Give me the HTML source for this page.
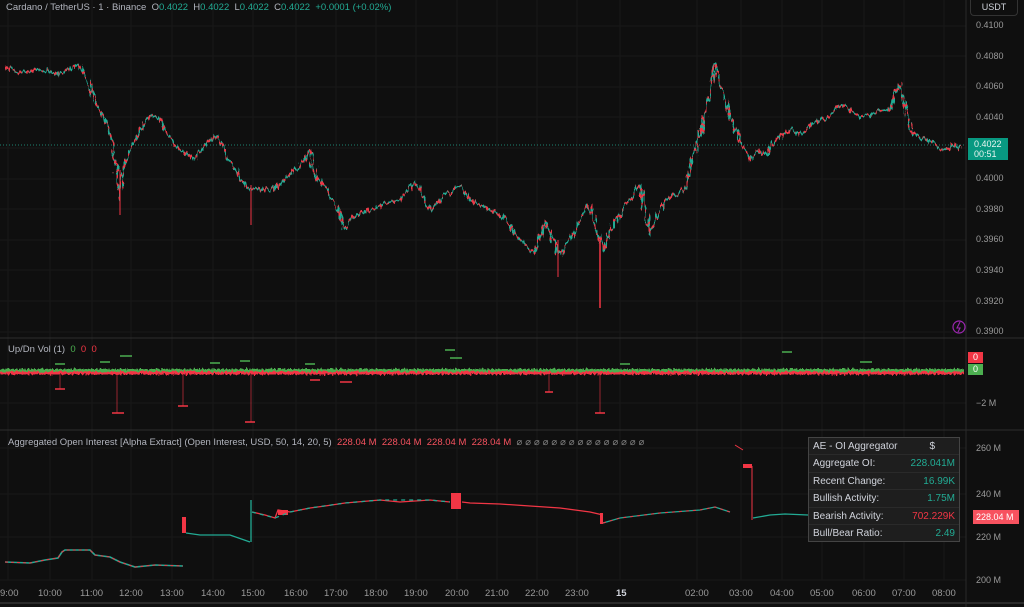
<!DOCTYPE html>
<html><head><meta charset="utf-8"><style>
*{margin:0;padding:0;box-sizing:border-box}
body{width:1024px;height:607px;background:#0f0f0f;overflow:hidden;font-family:"Liberation Sans",sans-serif;position:relative;color:#b2b5be}
.t{position:absolute;font-size:9.5px;white-space:nowrap}
.ax{position:absolute;font-size:9px;color:#9a9a9a;left:976px}
.g{color:#22ab94}.r{color:#f23645}
.tt{position:absolute;left:808px;top:437px;width:152px;height:105px;background:#1e1e1e;border:1px solid #444;font-size:10px;color:#d1d4dc}
.tt div{height:17.4px;line-height:17.4px;padding:0 4px;display:flex;justify-content:space-between;border-bottom:1px solid #2a2a2a}
.tm{position:absolute;top:588px;font-size:9.5px;color:#9a9a9a}
</style></head><body>
<svg width="1024" height="607" style="position:absolute;left:0;top:0">
<defs>
<filter id="j" x="-5%" y="-20%" width="110%" height="140%">
<feTurbulence type="fractalNoise" baseFrequency="0.35 0.08" numOctaves="2" seed="3"/>
<feDisplacementMap in="SourceGraphic" scale="10" xChannelSelector="R" yChannelSelector="G"/>
</filter>
<filter id="v" x="0" y="-100%" width="100%" height="300%">
<feTurbulence type="fractalNoise" baseFrequency="0.5 0.2" numOctaves="2" seed="7"/>
<feDisplacementMap in="SourceGraphic" scale="5" xChannelSelector="R" yChannelSelector="G"/>
</filter>
</defs>
<g stroke="#191919" stroke-width="1">
<line x1="0" y1="26" x2="966" y2="26"/><line x1="0" y1="56" x2="966" y2="56"/><line x1="0" y1="87" x2="966" y2="87"/><line x1="0" y1="117" x2="966" y2="117"/><line x1="0" y1="148" x2="966" y2="148"/><line x1="0" y1="179" x2="966" y2="179"/><line x1="0" y1="209" x2="966" y2="209"/><line x1="0" y1="240" x2="966" y2="240"/><line x1="0" y1="270" x2="966" y2="270"/><line x1="0" y1="301" x2="966" y2="301"/><line x1="0" y1="332" x2="966" y2="332"/>
<line x1="0" y1="403" x2="966" y2="403"/><line x1="0" y1="448" x2="966" y2="448"/><line x1="0" y1="494" x2="966" y2="494"/><line x1="0" y1="537" x2="966" y2="537"/><line x1="0" y1="580" x2="966" y2="580"/>
<line x1="8" y1="0" x2="8" y2="580"/><line x1="50" y1="0" x2="50" y2="580"/><line x1="92" y1="0" x2="92" y2="580"/><line x1="131" y1="0" x2="131" y2="580"/><line x1="172" y1="0" x2="172" y2="580"/><line x1="213" y1="0" x2="213" y2="580"/><line x1="253" y1="0" x2="253" y2="580"/><line x1="296" y1="0" x2="296" y2="580"/><line x1="336" y1="0" x2="336" y2="580"/><line x1="376" y1="0" x2="376" y2="580"/><line x1="416" y1="0" x2="416" y2="580"/><line x1="457" y1="0" x2="457" y2="580"/><line x1="497" y1="0" x2="497" y2="580"/><line x1="537" y1="0" x2="537" y2="580"/><line x1="577" y1="0" x2="577" y2="580"/><line x1="620" y1="0" x2="620" y2="580"/><line x1="697" y1="0" x2="697" y2="580"/><line x1="741" y1="0" x2="741" y2="580"/><line x1="782" y1="0" x2="782" y2="580"/><line x1="822" y1="0" x2="822" y2="580"/><line x1="864" y1="0" x2="864" y2="580"/><line x1="904" y1="0" x2="904" y2="580"/><line x1="944" y1="0" x2="944" y2="580"/>
</g>
<line x1="0" y1="338" x2="1024" y2="338" stroke="#2e2e2e"/>
<line x1="0" y1="430" x2="1024" y2="430" stroke="#2e2e2e"/>
<line x1="966" y1="0" x2="966" y2="607" stroke="#2a2a2a"/>
<line x1="0" y1="603" x2="1024" y2="603" stroke="#2a2a2a" stroke-width="2"/>
<line x1="0" y1="145" x2="966" y2="145" stroke="#22ab94" stroke-dasharray="1,2" stroke-width="0.8"/>
<g filter="url(#j)">
<polyline fill="none" stroke="#22ab94" stroke-width="2.2" stroke-linejoin="round" points="5,68 20,72 40,70 60,74 80,65 95,100 105,120 110,130 115,160 120,200 125,160 130,150 140,130 150,115 160,120 165,130 175,145 180,150 190,158 195,160 205,145 215,135 225,150 235,170 245,185 250,190 260,188 270,190 280,185 290,175 300,165 310,150 315,175 325,185 330,195 340,215 345,230 355,215 370,210 385,205 400,200 415,180 425,200 430,210 445,195 460,185 470,200 480,205 490,210 500,215 510,225 520,240 530,250 535,255 545,220 555,245 560,255 570,240 575,230 585,210 590,205 595,225 600,240 604,250 610,230 620,215 630,200 640,185 645,210 650,235 658,215 665,200 675,195 685,190 690,165 700,135 708,100 715,65 720,85 725,100 735,130 745,150 750,160 760,150 765,155 775,140 790,130 800,135 810,125 820,120 830,115 840,105 850,110 860,118 870,115 880,110 890,110 895,95 900,85 905,105 910,130 920,138 930,140 940,150 950,148 955,145 960,148"/>
<polyline fill="none" stroke="#f23645" stroke-width="2.2" stroke-dasharray="3,4" stroke-linejoin="round" points="5,68 20,72 40,70 60,74 80,65 95,100 105,120 110,130 115,160 120,200 125,160 130,150 140,130 150,115 160,120 165,130 175,145 180,150 190,158 195,160 205,145 215,135 225,150 235,170 245,185 250,190 260,188 270,190 280,185 290,175 300,165 310,150 315,175 325,185 330,195 340,215 345,230 355,215 370,210 385,205 400,200 415,180 425,200 430,210 445,195 460,185 470,200 480,205 490,210 500,215 510,225 520,240 530,250 535,255 545,220 555,245 560,255 570,240 575,230 585,210 590,205 595,225 600,240 604,250 610,230 620,215 630,200 640,185 645,210 650,235 658,215 665,200 675,195 685,190 690,165 700,135 708,100 715,65 720,85 725,100 735,130 745,150 750,160 760,150 765,155 775,140 790,130 800,135 810,125 820,120 830,115 840,105 850,110 860,118 870,115 880,110 890,110 895,95 900,85 905,105 910,130 920,138 930,140 940,150 950,148 955,145 960,148"/>
</g>
<line x1="600" y1="240" x2="600" y2="308" stroke="#f23645" stroke-width="1.5"/>
<line x1="120" y1="170" x2="120" y2="215" stroke="#f23645"/>
<line x1="558" y1="240" x2="558" y2="277" stroke="#f23645"/>
<line x1="251" y1="185" x2="251" y2="225" stroke="#f23645"/>
<!-- volume -->
<g filter="url(#v)">
<rect x="0" y="369" width="965" height="2.5" fill="#4caf50"/>
<rect x="0" y="371.5" width="965" height="3" fill="#f23645"/>
</g>
<g stroke="#4caf50" stroke-width="1.5"><line x1="55" y1="364" x2="65" y2="364"/><line x1="100" y1="362" x2="110" y2="362"/><line x1="120" y1="356" x2="132" y2="356"/><line x1="210" y1="363" x2="220" y2="363"/><line x1="240" y1="361" x2="250" y2="361"/><line x1="305" y1="364" x2="315" y2="364"/><line x1="445" y1="350" x2="455" y2="350"/><line x1="450" y1="358" x2="462" y2="358"/><line x1="620" y1="364" x2="630" y2="364"/><line x1="782" y1="352" x2="792" y2="352"/><line x1="860" y1="362" x2="872" y2="362"/></g>
<g stroke="#f23645" stroke-width="1.5"><line x1="55" y1="389" x2="65" y2="389"/><line x1="112" y1="413" x2="124" y2="413"/><line x1="178" y1="406" x2="188" y2="406"/><line x1="245" y1="422" x2="255" y2="422"/><line x1="545" y1="392" x2="553" y2="392"/><line x1="595" y1="413" x2="605" y2="413"/><line x1="310" y1="380" x2="320" y2="380"/><line x1="340" y1="382" x2="352" y2="382"/></g>
<g stroke="#f23645" stroke-width="0.6"><line x1="60" y1="372" x2="60" y2="389"/><line x1="117" y1="372" x2="117" y2="413"/><line x1="183" y1="372" x2="183" y2="406"/><line x1="251" y1="372" x2="251" y2="422"/><line x1="549" y1="372" x2="549" y2="392"/><line x1="600" y1="372" x2="600" y2="413"/></g>
<!-- OI -->
<polyline fill="none" stroke="#22ab94" stroke-width="1.6" points="5,562 30,563 45,560 58,558 62,552 65,550 90,550 95,555 110,557 120,562 135,567 155,565 183,566"/>
<polyline fill="none" stroke="#f23645" stroke-width="1" stroke-dasharray="3,3" points="5,562 30,563 45,560 58,558 62,552 65,550 90,550 95,555 110,557 120,562 135,567 155,565 183,566"/>
<rect x="182" y="517" width="4" height="16" fill="#f23645"/>
<polyline fill="none" stroke="#22ab94" stroke-width="1.3" points="186,533 200,535 230,535 250,542"/>
<line x1="251" y1="500" x2="251" y2="542" stroke="#22ab94" stroke-width="1.3"/>
<polyline fill="none" stroke="#f23645" stroke-width="1.3" points="252,512 265,515 275,518 278,510 290,512 310,508 325,506 345,503 380,500 400,502 430,500 450,502"/>
<rect x="278" y="510" width="10" height="5" fill="#f23645"/>
<rect x="451" y="493" width="10" height="16" fill="#f23645"/>
<polyline fill="none" stroke="#22ab94" stroke-width="1.3" stroke-dasharray="4,4" points="252,512 275,518 290,512 310,508 345,503 380,500 430,500 450,502"/>
<polyline fill="none" stroke="#f23645" stroke-width="1.3" points="462,502 470,503 500,504 530,506 560,508 590,512 603,515"/>
<rect x="600" y="513" width="3" height="11" fill="#f23645"/>
<polyline fill="none" stroke="#22ab94" stroke-width="1.3" points="603,523 620,518 660,513 700,510 715,507 730,512"/>
<polyline fill="none" stroke="#f23645" stroke-width="1" stroke-dasharray="3,4" points="603,523 620,518 660,513 700,510 715,507 730,512"/>
<line x1="735" y1="445" x2="743" y2="450" stroke="#f23645"/>
<rect x="743" y="464" width="9" height="4" fill="#f23645"/>
<line x1="752" y1="466" x2="752" y2="520" stroke="#f23645"/>
<polyline fill="none" stroke="#22ab94" stroke-width="1.3" points="753,518 770,515 785,514 808,515"/>
<circle cx="959" cy="327" r="6" fill="none" stroke="#9c27b0" stroke-width="1.2"/>
<path d="M960 322 L957 328 L960 328 L958 332" fill="none" stroke="#9c27b0" stroke-width="1.1"/>
</svg>
<div class="t" style="left:6px;top:2px;color:#b2b5be">Cardano / TetherUS · 1 · Binance &nbsp;O<span class="g">0.4022</span> &nbsp;H<span class="g">0.4022</span> &nbsp;L<span class="g">0.4022</span> &nbsp;C<span class="g">0.4022</span> &nbsp;<span class="g">+0.0001 (+0.02%)</span></div>
<div style="position:absolute;left:970px;top:0;width:48px;height:16px;border:1px solid #333;border-top:none;border-radius:0 0 4px 4px;font-size:9px;color:#d1d4dc;text-align:center;line-height:14px">USDT</div>
<div class="ax" style="top:20px">0.4100</div><div class="ax" style="top:51px">0.4080</div><div class="ax" style="top:81px">0.4060</div><div class="ax" style="top:112px">0.4040</div><div class="ax" style="top:173px">0.4000</div><div class="ax" style="top:204px">0.3980</div><div class="ax" style="top:234px">0.3960</div><div class="ax" style="top:265px">0.3940</div><div class="ax" style="top:296px">0.3920</div><div class="ax" style="top:326px">0.3900</div>
<div style="position:absolute;left:968px;top:138px;width:40px;height:22px;background:#089981;color:#e8f5f1;font-size:9px;line-height:10px;padding:1px 0 0 6px">0.4022<br>00:51</div>
<div class="t" style="left:8px;top:344px">Up/Dn Vol (1) &nbsp;<span style="color:#4caf50">0</span> &nbsp;<span class="r">0</span> &nbsp;<span class="r">0</span></div>
<div style="position:absolute;left:968px;top:352px;width:15px;height:11px;background:#f23645;color:#fff;font-size:9px;text-align:center;line-height:11px">0</div>
<div style="position:absolute;left:968px;top:364px;width:15px;height:11px;background:#4caf50;color:#fff;font-size:9px;text-align:center;line-height:11px">0</div>
<div class="ax" style="top:398px">−2 M</div>
<div class="t" style="left:8px;top:437px">Aggregated Open Interest [Alpha Extract] (Open Interest, USD, 50, 14, 20, 5) &nbsp;<span style="color:#f7525f">228.04 M &nbsp;228.04 M &nbsp;228.04 M &nbsp;228.04 M</span> &nbsp;<span style="color:#888;letter-spacing:3px">⌀⌀⌀⌀⌀⌀⌀⌀⌀⌀⌀⌀⌀⌀⌀</span></div>
<div class="ax" style="top:443px">260 M</div><div class="ax" style="top:489px">240 M</div><div class="ax" style="top:532px">220 M</div><div class="ax" style="top:575px">200 M</div>
<div style="position:absolute;left:973px;top:510px;width:46px;height:14px;background:#f7525f;color:#fff;font-size:9px;line-height:14px;padding-left:3px">228.04 M</div>
<div class="tt">
<div><span>AE - OI Aggregator</span><span style="margin-right:20px">$</span></div>
<div><span>Aggregate OI:</span><span class="g">228.041M</span></div>
<div><span>Recent Change:</span><span class="g">16.99K</span></div>
<div><span>Bullish Activity:</span><span class="g">1.75M</span></div>
<div><span>Bearish Activity:</span><span class="r">702.229K</span></div>
<div style="border:none"><span>Bull/Bear Ratio:</span><span class="g">2.49</span></div>
</div>
<div class="tm" style="left:0">9:00</div><div class="tm" style="left:38px">10:00</div><div class="tm" style="left:80px">11:00</div><div class="tm" style="left:119px">12:00</div><div class="tm" style="left:160px">13:00</div><div class="tm" style="left:201px">14:00</div><div class="tm" style="left:241px">15:00</div><div class="tm" style="left:284px">16:00</div><div class="tm" style="left:324px">17:00</div><div class="tm" style="left:364px">18:00</div><div class="tm" style="left:404px">19:00</div><div class="tm" style="left:445px">20:00</div><div class="tm" style="left:485px">21:00</div><div class="tm" style="left:525px">22:00</div><div class="tm" style="left:565px">23:00</div><div class="tm" style="left:616px;color:#d1d4dc;font-weight:bold">15</div><div class="tm" style="left:685px">02:00</div><div class="tm" style="left:729px">03:00</div><div class="tm" style="left:770px">04:00</div><div class="tm" style="left:810px">05:00</div><div class="tm" style="left:852px">06:00</div><div class="tm" style="left:892px">07:00</div><div class="tm" style="left:932px">08:00</div>
</body></html>
